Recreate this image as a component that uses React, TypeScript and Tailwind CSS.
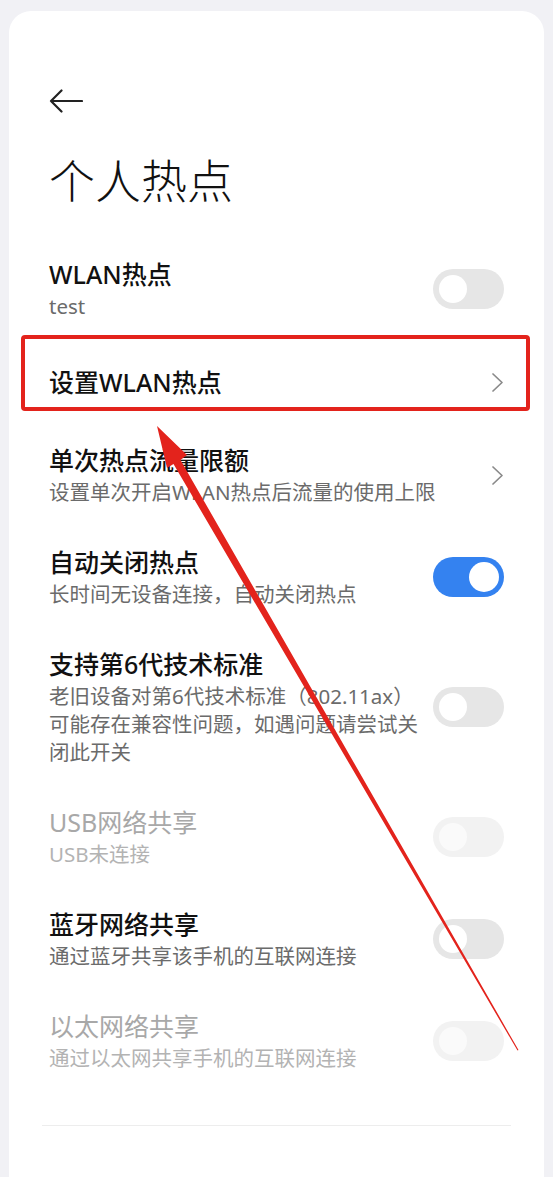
import type { ReactNode } from 'react'

const FONT = { fontFamily: '"Noto Sans", "Noto Sans CJK SC", sans-serif' }

interface IToggleProps {
  on?: boolean
  disabled?: boolean
}

const Toggle = ({ on = false, disabled = false }: IToggleProps) => {
  if (on) {
    return (
      <div className="flex h-[40px] w-[71px] shrink-0 items-center justify-end rounded-full bg-[#3482f0] px-[5px]">
        <div className="size-[30px] rounded-full bg-white" />
      </div>
    )
  }
  return (
    <div
      className={
        disabled
          ? 'flex h-[40px] w-[71px] shrink-0 items-center rounded-full bg-[#f2f2f2] px-[6px]'
          : 'flex h-[40px] w-[71px] shrink-0 items-center rounded-full bg-[#e6e6e6] px-[6px]'
      }
    >
      <div
        className={
          disabled ? 'size-[28px] rounded-full bg-[#fafafa]' : 'size-[28px] rounded-full bg-white'
        }
      />
    </div>
  )
}

const Chevron = () => (
  <svg width="13" height="21" viewBox="0 0 13 21" fill="none" className="shrink-0">
    <path d="M2 2 L11 10.5 L2 19" stroke="#8a8a8a" strokeWidth="1.7" strokeLinecap="round" strokeLinejoin="round" />
  </svg>
)

interface IRowProps {
  title: string
  subtitle?: string
  disabled?: boolean
  right: ReactNode
}

const Row = ({ title, subtitle, disabled = false, right }: IRowProps) => (
  <div className="flex items-center gap-[8px] px-[40px] py-[20px]">
    <div className="flex min-w-0 flex-1 flex-col">
      <p
        className={
          disabled
            ? 'text-[25px] leading-[32px] text-[#a8a8a8]'
            : 'text-[25px] font-medium leading-[32px] text-[#111111]'
        }
      >
        {title}
      </p>
      {subtitle && (
        <p
          className={
            disabled
              ? 'mt-[2px] text-[20.5px] leading-[28px] text-[#b3b3b3]'
              : 'mt-[2px] text-[20.5px] leading-[28px] text-[#6b6b6b]'
          }
        >
          {subtitle}
        </p>
      )}
    </div>
    {right}
  </div>
)

export default function App() {
  return (
    <div className="relative h-[1177px] w-full overflow-hidden bg-[#f1f1f5]" style={FONT}>
      <div className="absolute inset-x-[9px] top-[11px] bottom-[-40px] rounded-[22px] bg-white">
        <div className="px-[40px] pt-[78px]">
          <svg width="34" height="24" viewBox="0 0 34 24" fill="none">
            <path d="M33 12 H2 M12.5 1.5 L2 12 L12.5 22.5" stroke="#222222" strokeWidth="2.2" strokeLinecap="round" strokeLinejoin="round" />
          </svg>
          <h1 className="mt-[39px] text-[46px] font-light leading-[56px] text-[#111111]">个人热点</h1>
        </div>

        <div className="mt-[30px] flex flex-col">
          <Row title="WLAN热点" subtitle="test" right={<Toggle />} />
          <div className="flex h-[84px] items-center justify-between px-[40px]">
            <p className="text-[25px] font-medium leading-[32px] text-[#111111]">设置WLAN热点</p>
            <Chevron />
          </div>
          <Row title="单次热点流量限额" subtitle="设置单次开启WLAN热点后流量的使用上限" right={<Chevron />} />
          <Row title="自动关闭热点" subtitle="长时间无设备连接，自动关闭热点" right={<Toggle on />} />
          <Row
            title="支持第6代技术标准"
            subtitle="老旧设备对第6代技术标准（802.11ax）可能存在兼容性问题，如遇问题请尝试关闭此开关"
            right={<Toggle />}
          />
          <Row title="USB网络共享" subtitle="USB未连接" disabled right={<Toggle disabled />} />
          <Row title="蓝牙网络共享" subtitle="通过蓝牙共享该手机的互联网连接" right={<Toggle />} />
          <Row title="以太网络共享" subtitle="通过以太网共享手机的互联网连接" disabled right={<Toggle disabled />} />
          <div className="mx-[33px] mt-[33px] h-px bg-[#ededed]" />
        </div>
      </div>

      {/* annotation: red box + arrow */}
      <div className="pointer-events-none absolute left-[21px] top-[335px] h-[76px] w-[509px] rounded-[4px] border-[4px] border-[#e3231c]" />
      <svg className="pointer-events-none absolute left-0 top-0" width="553" height="1177" viewBox="0 0 553 1177">
        <polygon
          points="157,426 187,455 180.5,460 518.5,1050 517.5,1050.5 173.5,464 167,468"
          fill="#e3231c"
        />
      </svg>
    </div>
  )
}
